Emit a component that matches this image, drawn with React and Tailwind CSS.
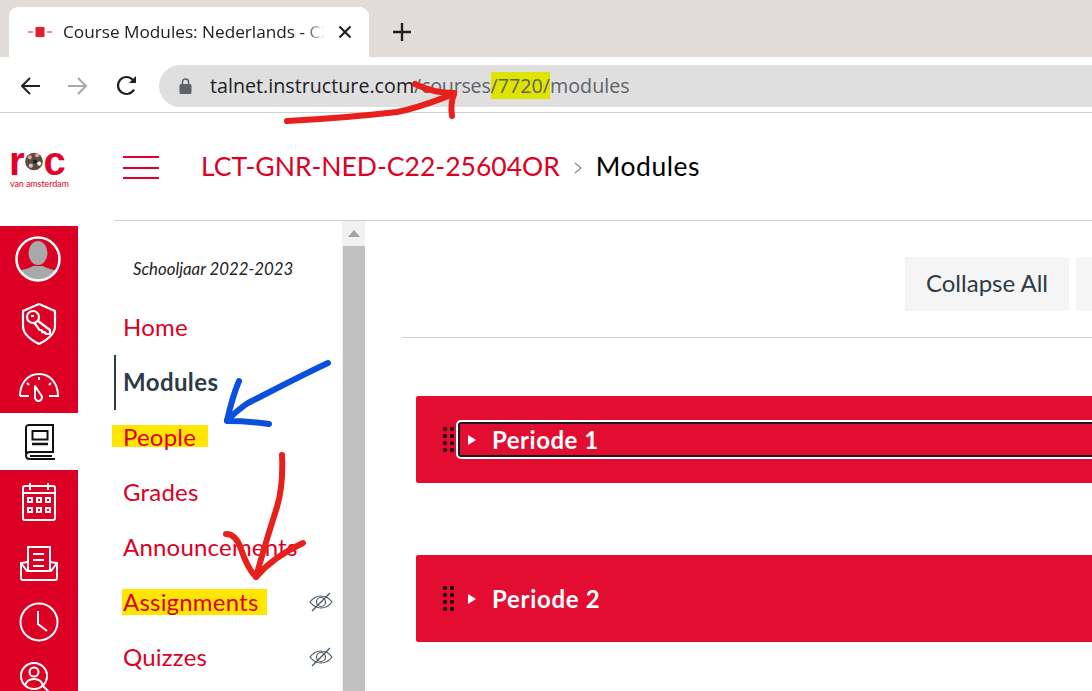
import React from 'react';

const railIcon = 'w-[78px] flex items-center justify-center';

const Avatar = () => (
  <svg width="46" height="46" viewBox="0 0 46 46" className="-ml-[2px]">
    <defs>
      <clipPath id="av"><circle cx="23" cy="23" r="21" /></clipPath>
    </defs>
    <g clipPath="url(#av)" fill="#a8a8a8">
      <ellipse cx="23" cy="17" rx="9.500" ry="12" />
      <path d="M2 46v-9c4-4 12-4 16-7h10c4 3 12 3 16 7v9z" />
    </g>
    <circle cx="23" cy="23" r="21.500" fill="none" stroke="#fff" strokeWidth="2.500" />
  </svg>
);

const ShieldKey = () => (
  <svg width="38" height="44" viewBox="0 0 38 44" fill="none" stroke="#fff" strokeWidth="2.200">
    <path d="M19 2 35 9v15c0 8-8 14-16 18C11 38 3 32 3 24V9z" strokeLinejoin="round" />
    <circle cx="13" cy="15" r="6" />
    <path d="M18 19 30 28v4h-4l-1.500-2-2 .5-1-2.500h-2L14.500 21" strokeLinejoin="round" />
    <path d="M11 14h3" />
  </svg>
);

const Gauge = () => (
  <svg width="40" height="30" viewBox="0 0 40 30" fill="none" stroke="#fff" strokeWidth="2">
    <path d="M1 24C1 11 9 2 20 2s19 9 19 22h-9M1 24h9" />
    <path d="M16 14l6 9a3.500 3.500 0 1 1-6 2z" strokeLinejoin="round" />
    <path d="M20 5v3M8 11l2 2M32 11l-2 2" />
  </svg>
);

const Book = () => (
  <svg width="32" height="38" viewBox="0 0 32 38" fill="none" stroke="#111" strokeWidth="2">
    <path d="M3 31V4a3 3 0 0 1 3-2h24v27H7c-2 0-4 1-4 3.500S5 36 7 36h25" />
    <path d="M7 33h22" />
    <rect x="9.500" y="8" width="15" height="8.500" />
    <path d="M9 21h16" strokeWidth="2.500" />
  </svg>
);

const Calendar = () => (
  <svg width="36" height="40" viewBox="0 0 36 40" fill="none" stroke="#fff" strokeWidth="2">
    <rect x="2" y="4" width="32" height="34" rx="2" />
    <path d="M9 1v7M27 1v7M2 11h32" />
    <g fill="#fff" stroke="none">
      <path fillRule="evenodd" d="M6 15h6v6H6zM8 17v2h2v-2zM15 15h6v6h-6zM17 17v2h2v-2zM24 15h6v6h-6zM26 17v2h2v-2zM6 25h6v6H6zM8 27v2h2v-2zM15 25h6v6h-6zM17 27v2h2v-2zM24 25h6v6h-6zM26 27v2h2v-2z" />
    </g>
  </svg>
);

const Inbox = () => (
  <svg width="40" height="36" viewBox="0 0 40 36" fill="none" stroke="#fff" strokeWidth="2">
    <path d="M9 25V2h22v23" />
    <path d="M14 9h11M14 15h11M14 21h11" />
    <path d="M9 17l-7 1v15a2 2 0 0 0 2 2h32a2 2 0 0 0 2-2V18l-7-1M2 18l6 8h24l6-8" />
  </svg>
);

const Clock = () => (
  <svg width="40" height="40" viewBox="0 0 40 40" fill="none" stroke="#fff" strokeWidth="2">
    <circle cx="20" cy="20" r="18.500" />
    <path d="M19 9v13l9 7" />
  </svg>
);

const UserSearch = () => (
  <svg width="36" height="36" viewBox="0 0 36 36" fill="none" stroke="#fff" strokeWidth="2" className="-ml-[6px]">
    <circle cx="16" cy="16" r="13" />
    <circle cx="16" cy="12" r="4.500" />
    <path d="M7 26c1-5 5-7 9-7s8 2 9 7M25 26l8 8" />
  </svg>
);

const EyeOff = () => (
  <svg width="24" height="20" viewBox="0 0 24 20" fill="none" stroke="#4a5560" strokeWidth="1.200">
    <path d="M1 10c3-4 7-6 11-6s8 2 11 6c-3 4-7 6-11 6S4 14 1 10z" />
    <circle cx="12" cy="10" r="4.500" />
    <path d="M3 19 21 1" />
  </svg>
);

const GripDots = () => (
  <div className="grid grid-cols-2 gap-x-[3px] gap-y-[3px] w-[11px]">
    {[0, 1, 2, 3, 4, 5, 6, 7].map((i) => (
      <span key={i} className="w-1 h-1 rounded-full bg-black" />
    ))}
  </div>
);

const Caret = () => (
  <svg width="8" height="10" viewBox="0 0 8 10"><path d="M0 0l8 5-8 5z" fill="#fff" /></svg>
);

const NavItem = ({ label, hidden, mark }) => (
  <div className="relative h-[55px] flex items-center pl-[9px] pr-[9px] pb-[2px] justify-between text-[24px] tracking-[0.2px] text-[#dc0024]">
    {mark && <span className={`absolute ${mark}`} />}
    <span className="relative">{label}</span>
    {hidden && <EyeOff />}
  </div>
);

export default function App() {
  return (
    <div className="relative w-[1092px] h-[691px] overflow-hidden bg-white font-['Lato',sans-serif]">
      {/* browser tabs */}
      <div className="h-[57px] bg-[#e2dcd9] flex items-end pl-[9px]">
        <div className="w-[360px] h-[50px] bg-white rounded-t-[9px] flex items-center pl-[19px] pr-[17px]">
          <svg width="24" height="10" viewBox="0 0 24 10" className="shrink-0">
            <rect x="7.500" y="0" width="9" height="10" fill="#e2202c" />
            <rect x="0" y="4" width="5" height="2" fill="#e58a90" />
            <rect x="19" y="4" width="5" height="2" fill="#e58a90" />
          </svg>
          <span className="ml-[11px] w-[262px] overflow-hidden whitespace-nowrap text-[17.2px] text-[#202124] font-['Open_Sans',sans-serif] [mask-image:linear-gradient(to_right,black_92%,transparent)]">
            Course Modules: Nederlands - C22
          </span>
          <svg width="14" height="14" viewBox="0 0 14 14" className="ml-auto" stroke="#202124" strokeWidth="2.200">
            <path d="M1.500 1.500l11 11M12.500 1.500l-11 11" />
          </svg>
        </div>
        <svg width="18" height="18" viewBox="0 0 18 18" className="ml-[24px] mb-[16px]" stroke="#202124" strokeWidth="2.400">
          <path d="M9 0v18M0 9h18" />
        </svg>
      </div>

      {/* toolbar */}
      <div className="h-[56px] bg-white border-b border-[#d0d0d0] flex items-center pl-[20px] pt-[2px]">
        <svg width="20" height="20" viewBox="0 0 20 20" fill="none" stroke="#202124" strokeWidth="2">
          <path d="M20 10H2M10 2l-8 8 8 8" />
        </svg>
        <svg width="20" height="20" viewBox="0 0 20 20" fill="none" stroke="#a9a9a9" strokeWidth="2" className="ml-[28px]">
          <path d="M0 10h18M10 2l8 8-8 8" />
        </svg>
        <svg width="22" height="22" viewBox="0 0 22 22" fill="none" stroke="#202124" strokeWidth="2.200" className="ml-[28px]">
          <path d="M18 14.500A8.500 8.500 0 1 1 17 5" />
          <path d="M20 1v7h-7z" fill="#202124" stroke="none" />
        </svg>
        <div className="ml-[21px] flex-1 h-[42px] -mr-[40px] rounded-l-full bg-[#dfdfdf] flex items-center pl-[20px] font-['Open_Sans',sans-serif] text-[19.7px]">
          <svg width="13" height="16" viewBox="0 0 13 16">
            <path d="M2 6h9a1.500 1.500 0 0 1 1.500 1.500v7A1.500 1.500 0 0 1 11 16H2A1.500 1.500 0 0 1 .5 14.500v-7A1.500 1.500 0 0 1 2 6z" fill="#5f6368" />
            <path d="M3.500 6V4a3 3 0 0 1 6 0v2" fill="none" stroke="#5f6368" strokeWidth="1.500" />
          </svg>
          <span className="ml-[18px] text-[#202124] whitespace-nowrap">talnet.instructure.com</span>
          <span className="text-[#5f6368] whitespace-nowrap">
            <span className="tracking-[-0.25px]">/courses</span><span className="bg-[#dfe300]">/7720/</span>modules
          </span>
        </div>
      </div>

      {/* course header */}
      <div className="h-[108px] flex">
        <div className="w-[114px] shrink-0 flex flex-col pt-[33px] pl-[9px]">
          <div className="flex items-center text-[#e4002b] font-bold text-[40px] leading-[30px] h-[30px] font-['Liberation_Sans',sans-serif]">
            <span>r</span>
            <svg width="24" height="25" viewBox="0 0 18 24" className="-ml-[3px] -mr-[2px]">
              <circle cx="9" cy="12" r="8.500" fill="#5d4a42" />
              <circle cx="5" cy="8" r="2" fill="#d9a68a" />
              <circle cx="12" cy="6" r="2" fill="#d9a68a" />
              <circle cx="14" cy="14" r="2" fill="#fff" />
              <circle cx="6" cy="16" r="2" fill="#c9c9c9" />
              <circle cx="10" cy="12" r="2" fill="#222" />
            </svg>
            <span>c</span>
          </div>
          <span className="mt-[2px] pl-[1px] text-[9px] leading-[11px] tracking-[-0.1px] text-[#e4002b] whitespace-nowrap">van amsterdam</span>
        </div>
        <div className="flex-1 flex flex-col">
          <div className="h-[107px] flex items-center pl-[9px]">
            <div className="w-[36px] h-[23px] mt-[2px] flex flex-col justify-between">
              <span className="h-[2px] bg-[#e4002b]" />
              <span className="h-[2px] bg-[#e4002b]" />
              <span className="h-[2px] bg-[#e4002b]" />
            </div>
            <span className="ml-[42px] text-[#dc0024] text-[26.5px]">LCT-GNR-NED-C22-25604OR</span>
            <svg width="8" height="14" viewBox="0 0 8 14" fill="none" stroke="#8a8a8a" strokeWidth="1.200" className="ml-[14px] mt-[3px]">
              <path d="M1 2l6 5-6 5" />
            </svg>
            <span className="ml-[14px] text-black text-[26.5px] tracking-[0.5px]">Modules</span>
          </div>
          <div className="h-px bg-[#cfcfcf]" />
        </div>
      </div>

      {/* body */}
      <div className="flex h-[470px]">
        <div className="w-[78px] shrink-0 flex flex-col pt-[5px]">
          <div className="bg-[#dc0024] h-[187px] flex flex-col">
            <div className={`${railIcon} h-[66px]`}><Avatar /></div>
            <div className={`${railIcon} h-[64px]`}><ShieldKey /></div>
            <div className={`${railIcon} h-[57px] items-end! pb-[11px]`}><Gauge /></div>
          </div>
          <div className={`${railIcon} h-[57px] bg-white`}><Book /></div>
          <div className="bg-[#dc0024] flex-1 flex flex-col overflow-hidden">
            <div className={`${railIcon} h-[64px] shrink-0`}><Calendar /></div>
            <div className={`${railIcon} h-[58px] shrink-0`}><Inbox /></div>
            <div className={`${railIcon} h-[60px] shrink-0`}><Clock /></div>
            <div className={`${railIcon} h-[50px] shrink-0 items-start! pt-[8px]`}><UserSearch /></div>
          </div>
        </div>

        <div className="w-[36px] shrink-0" />

        {/* course nav */}
        <div className="w-[228px] shrink-0 pt-[30px]">
          <p className="pl-[19px] italic text-[16.8px] leading-[36px] text-[#222] h-[49px]">Schooljaar 2022-2023</p>
          <NavItem label="Home" />
          <div className="h-[55px] border-l-2 border-[#2d3b45] flex items-center pl-[7px] pb-[2px] text-[24px] tracking-[0.4px] font-bold text-[#2d3b45]">Modules</div>
          <NavItem label="People" mark="-left-[2px] w-[96px] top-[15px] h-[22px] bg-[#ffe600]" />
          <NavItem label="Grades" />
          <NavItem label="Announcements" />
          <NavItem label="Assignments" hidden mark="left-[8px] w-[145px] top-[14px] h-[26px] bg-[#ffe600]" />
          <NavItem label="Quizzes" hidden />
        </div>

        {/* scrollbar */}
        <div className="w-[23px] shrink-0 bg-[#f1f1f1] flex flex-col border-l border-[#f1f1f1]">
          <div className="h-[25px] flex items-center justify-center">
            <svg width="12" height="7" viewBox="0 0 12 7"><path d="M6 0l6 7H0z" fill="#a3a3a3" /></svg>
          </div>
          <div className="flex-1 bg-[#c0c0c0]" />
        </div>

        {/* modules */}
        <div className="flex-1 pl-[37px]">
          <div className="h-[117px] border-b border-[#cfcfcf] flex justify-end items-start pt-[36px] -mr-[40px] gap-[7px]">
            <div className="w-[164px] h-[54px] bg-[#f5f5f5] flex items-center justify-center pb-[2px] text-[24px] text-[#2d3b45]">Collapse All</div>
            <div className="w-[56px] h-[54px] bg-[#f5f5f5]" />
          </div>
          <div className="ml-[14px] -mr-[40px] mt-[58px] h-[87px] bg-[#e30d32] flex items-center pl-[27px] rounded-l-[2px]">
            <GripDots />
            <div className="ml-[4px] flex-1 h-[35px] border-2 border-[#1b1b1b] outline outline-2 outline-white rounded-[3px] flex items-center pl-[8px]">
              <Caret />
              <span className="ml-[16px] text-white font-bold text-[24px] tracking-[0.5px]">Periode 1</span>
            </div>
          </div>
          <div className="ml-[14px] -mr-[40px] mt-[72px] h-[87px] bg-[#e30d32] flex items-center pl-[27px] rounded-l-[2px]">
            <GripDots />
            <div className="ml-[14px] flex items-center">
              <Caret />
              <span className="ml-[16px] text-white font-bold text-[24px] tracking-[0.7px]">Periode 2</span>
            </div>
          </div>
        </div>
      </div>

      {/* hand drawn annotations on top of the screenshot */}
      <svg className="absolute inset-0 pointer-events-none" width="1092" height="691" viewBox="0 0 1092 691" fill="none" strokeLinecap="round" strokeLinejoin="round">
        <g stroke="#e8201c" strokeWidth="6">
          <path d="M287 121c40-2 75-5 110-9 22-4 40-12 57-18" />
          <path d="M415 84c12 6 25 9 39 9 M454 94c-3 8-3 16-2 22" />
          <path d="M282 455c1 20 0 35-5 52-8 25-15 48-21 70" />
          <path d="M226 534c8 0 12 6 15 15 4 12 9 22 15 28 12-14 30-26 47-34" />
        </g>
        <g stroke="#0a50dc" strokeWidth="6">
          <path d="M328 363c-30 14-60 30-80 40-8 5-15 12-21 17" />
          <path d="M239 381c-5 12-9 26-12 40 12 0 28 1 42 3" />
        </g>
      </svg>
    </div>
  );
}
